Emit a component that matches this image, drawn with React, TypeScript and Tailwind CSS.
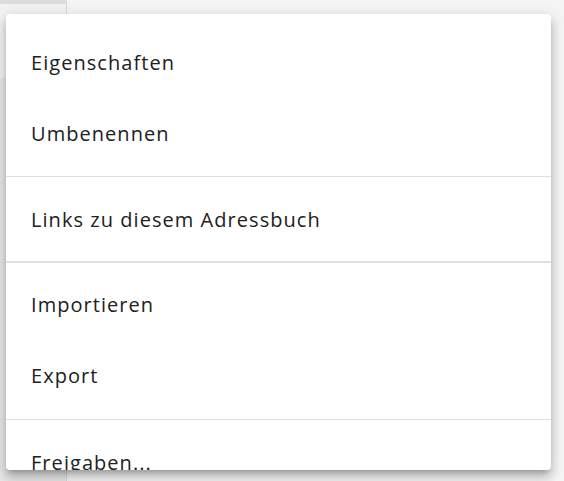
const sections: { items: string[]; cls: string }[] = [
  { items: ['Eigenschaften', 'Umbenennen'], cls: 'pb-[7px]' },
  { items: ['Links zu diesem Adressbuch'], cls: 'border-t border-[#e0e0e0] pt-[7px] pb-[6px]' },
  { items: ['Importieren', 'Export'], cls: 'border-t-2 border-[#e0e0e0] pt-[6px] pb-[8px]' },
  { items: ['Freigaben...'], cls: 'border-t border-[#e0e0e0] pt-[7px]' },
];

export default function App() {
  return (
    <div className="relative flex h-[481px] w-[564px] overflow-hidden bg-[#f5f5f5]" style={{ fontFamily: '"Open Sans", "Noto Sans", sans-serif' }}>
      <aside className="flex w-[67px] flex-col border-r border-[#d9d9d9]">
        <div className="h-[4px] bg-[#dcdcdc]" />
        <div className="h-[74px] bg-[#f3f3f3]" />
        <div className="flex-1 bg-[#e8e8e8]" />
      </aside>
      <div className="flex-1" />

      <div className="absolute left-[6px] top-[14px] h-[456px] w-[545px] overflow-hidden rounded-[4px] bg-white pt-[13px] shadow-[0_5px_5px_-3px_rgba(0,0,0,0.2),0_8px_10px_1px_rgba(0,0,0,0.14),0_3px_14px_2px_rgba(0,0,0,0.12)]">
        {sections.map((s, i) => (
          <div key={i} className={s.cls}>
            {s.items.map((label) => (
              <div key={label} className="flex h-[71px] items-center px-[25px] text-[20px] tracking-[1.05px] text-[#212121]">
                {label}
              </div>
            ))}
          </div>
        ))}
      </div>
    </div>
  );
}
